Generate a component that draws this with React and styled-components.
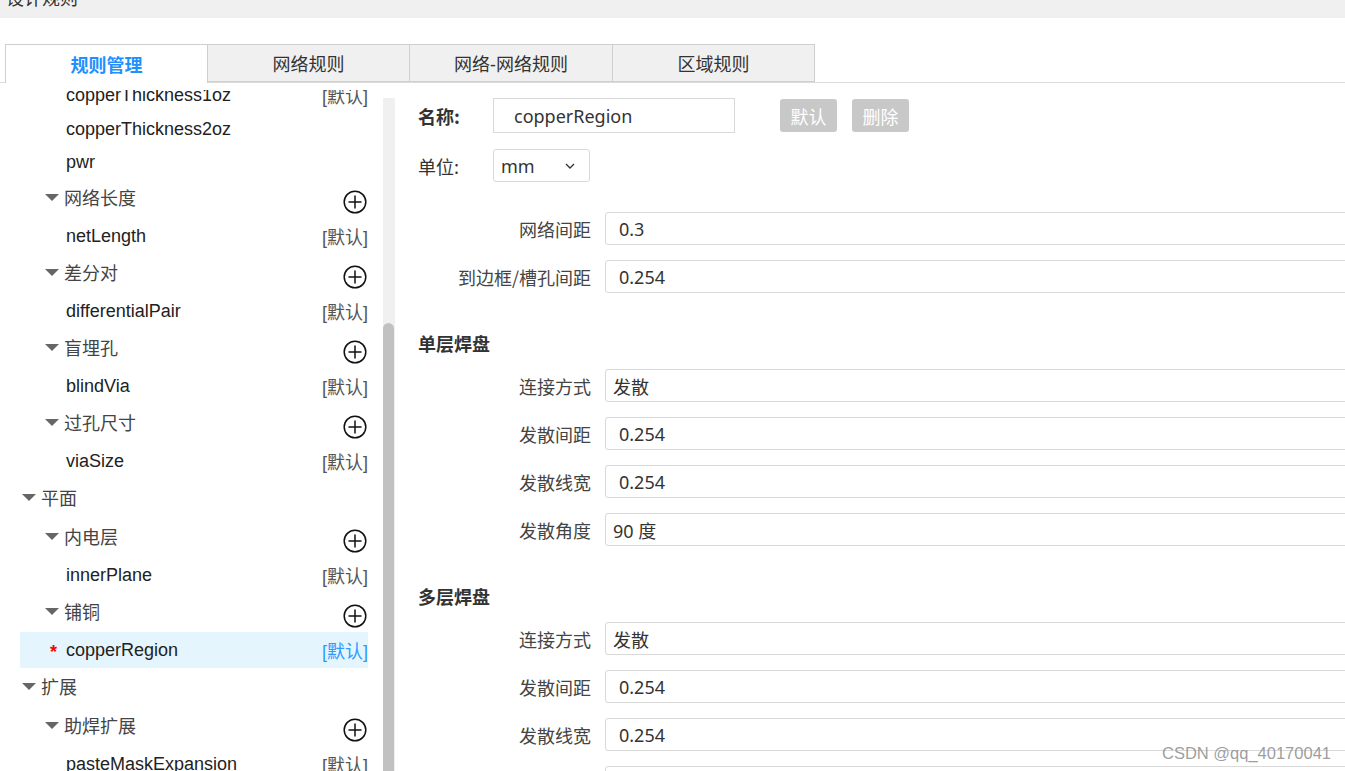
import React from "react";
import styled, { createGlobalStyle } from "styled-components";

const GlobalStyle = createGlobalStyle`
  html, body {
    margin: 0;
    padding: 0;
    background: #fff;
    overflow: hidden;
  }
  body {
    font-family: "Noto Sans", "Noto Sans CJK SC", sans-serif;
    color: #333;
  }
  * {
    box-sizing: border-box;
  }
`;

const treeData = [
  { type: "leaf", label: "copperThickness1oz", tag: true },
  { type: "leaf", label: "copperThickness2oz" },
  { type: "leaf", label: "pwr" },
  { type: "group", level: 2, label: "网络长度", add: true },
  { type: "leaf", label: "netLength", tag: true },
  { type: "group", level: 2, label: "差分对", add: true },
  { type: "leaf", label: "differentialPair", tag: true },
  { type: "group", level: 2, label: "盲埋孔", add: true },
  { type: "leaf", label: "blindVia", tag: true },
  { type: "group", level: 2, label: "过孔尺寸", add: true },
  { type: "leaf", label: "viaSize", tag: true },
  { type: "group", level: 1, label: "平面" },
  { type: "group", level: 2, label: "内电层", add: true },
  { type: "leaf", label: "innerPlane", tag: true },
  { type: "group", level: 2, label: "铺铜", add: true },
  { type: "leaf", label: "copperRegion", tag: true, selected: true, dirty: true },
  { type: "group", level: 1, label: "扩展" },
  { type: "group", level: 2, label: "助焊扩展", add: true },
  { type: "leaf", label: "pasteMaskExpansion", tag: true },
];

const sections = [
  {
    rows: [
      { label: "网络间距", value: "0.3" },
      { label: "到边框/槽孔间距", value: "0.254" },
    ],
  },
  {
    title: "单层焊盘",
    rows: [
      { label: "连接方式", value: "发散", pick: true },
      { label: "发散间距", value: "0.254" },
      { label: "发散线宽", value: "0.254" },
      { label: "发散角度", value: "90 度", pick: true },
    ],
  },
  {
    title: "多层焊盘",
    rows: [
      { label: "连接方式", value: "发散", pick: true },
      { label: "发散间距", value: "0.254" },
      { label: "发散线宽", value: "0.254" },
      { label: "", value: "" },
    ],
  },
];

const tabs = [
  { label: "规则管理", w: 203 },
  { label: "网络规则", w: 202 },
  { label: "网络-网络规则", w: 203 },
  { label: "区域规则", w: 202 },
];

function Caret() {
  return (
    <svg width="14" height="8" viewBox="0 0 14 8">
      <path d="M0 0 L14 0 L7 7 Z" fill="#666" />
    </svg>
  );
}

function AddIcon() {
  return (
    <svg width="24" height="24" viewBox="0 0 24 24">
      <circle cx="12" cy="12" r="10.8" fill="none" stroke="#111" strokeWidth="1.5" />
      <path d="M12 5.5 V18.5 M5.5 12 H18.5" stroke="#111" strokeWidth="1.5" />
    </svg>
  );
}

function Chevron() {
  return (
    <svg width="10" height="6" viewBox="0 0 10 6">
      <path d="M1 1 L5 5 L9 1" fill="none" stroke="#333" strokeWidth="1.3" />
    </svg>
  );
}

export default function App() {
  return (
    <>
      <GlobalStyle />
      <Page>
        <TitleBar>
          <TitleText>设计规则</TitleText>
        </TitleBar>
        <TabBar>
          {tabs.map((t, i) => (
            <Tab key={t.label} active={i === 0} first={i === 0} w={t.w}>
              {t.label}
            </Tab>
          ))}
        </TabBar>
        <Body>
          <LeftPane>
            <TreeViewport>
              <TreeList>
                {treeData.map((item, i) =>
                  item.type === "group" ? (
                    <GroupRow key={i} level={item.level}>
                      <CaretBox>
                        <Caret />
                      </CaretBox>
                      <GroupLabel>{item.label}</GroupLabel>
                      {item.add && (
                        <AddBox>
                          <AddIcon />
                        </AddBox>
                      )}
                    </GroupRow>
                  ) : (
                    <LeafRow key={i} tagged={item.tag} selected={item.selected}>
                      <Marker>{item.dirty ? "*" : ""}</Marker>
                      <LeafLabel>{item.label}</LeafLabel>
                      {item.tag && <Tag selected={item.selected}>[默认]</Tag>}
                    </LeafRow>
                  )
                )}
              </TreeList>
            </TreeViewport>
            <ScrollTrack>
              <ScrollThumb />
            </ScrollTrack>
          </LeftPane>
          <RightPane>
            <HeadRow>
              <HeadLabel bold>名称:</HeadLabel>
              <NameInput>copperRegion</NameInput>
              <ButtonGroup>
                <GrayButton>默认</GrayButton>
                <GrayButton>删除</GrayButton>
              </ButtonGroup>
            </HeadRow>
            <UnitRow>
              <HeadLabel>单位:</HeadLabel>
              <UnitSelect>
                <span>mm</span>
                <Chevron />
              </UnitSelect>
            </UnitRow>
            {sections.map((sec, si) => (
              <Section key={si} first={si === 0}>
                {sec.title && <SectionTitle>{sec.title}</SectionTitle>}
                {sec.rows.map((r, ri) => (
                  <FieldRow key={ri}>
                    <FieldLabel>{r.label}</FieldLabel>
                    <FieldBox pick={r.pick}>{r.value}</FieldBox>
                  </FieldRow>
                ))}
              </Section>
            ))}
            <Watermark>CSDN @qq_40170041</Watermark>
          </RightPane>
        </Body>
      </Page>
    </>
  );
}

const Page = styled.div`
  width: 1345px;
  height: 771px;
  display: flex;
  flex-direction: column;
  overflow: hidden;
`;

const TitleBar = styled.div`
  height: 18px;
  background: #f0f0f0;
  overflow: hidden;
  padding-left: 6px;
`;

const TitleText = styled.div`
  font-size: 18px;
  line-height: 24px;
  margin-top: -14px;
  color: #333;
`;

const TabBar = styled.div`
  margin-top: 26px;
  height: 39px;
  display: flex;
  padding-left: 5px;
  border-bottom: 1px solid #dcdcdc;
`;

const Tab = styled.div`
  width: ${({ w }) => w}px;
  height: ${({ active }) => (active ? "39px" : "38px")};
  display: flex;
  align-items: center;
  justify-content: center;
  font-size: 18px;
  font-weight: ${({ active }) => (active ? 700 : 400)};
  color: ${({ active }) => (active ? "#1e90ff" : "#333")};
  background: ${({ active }) => (active ? "#fff" : "#f0f0f0")};
  border: 1px solid #cfcfcf;
  border-left: ${({ first }) => (first ? "1px solid #cfcfcf" : "none")};
  border-bottom: ${({ active }) => (active ? "none" : "1px solid #cfcfcf")};
  position: relative;
  z-index: ${({ active }) => (active ? 1 : 0)};
`;

const Body = styled.div`
  flex: 1;
  display: flex;
  min-height: 0;
`;

const LeftPane = styled.div`
  width: 395px;
  display: flex;
  flex-shrink: 0;
`;

const TreeViewport = styled.div`
  width: 383px;
  overflow: hidden;
  margin-top: 7px;
`;

const TreeList = styled.div`
  margin: -13px 0 0 20px;
  width: 348px;
  font-size: 18px;
  color: #333;
`;

const GroupRow = styled.div`
  height: 39px;
  display: flex;
  align-items: flex-start;
  padding-left: ${({ level }) => (level === 1 ? "2px" : "25px")};
`;

const CaretBox = styled.div`
  width: 14px;
  height: 37px;
  display: flex;
  align-items: center;
  margin-right: 5px;
`;

const GroupLabel = styled.div`
  flex: 1;
  line-height: 37px;
  font-family: "Noto Sans CJK SC", sans-serif;
  font-size: 18px;
  color: #444;
`;

const AddBox = styled.div`
  margin-top: 11px;
  margin-right: 1px;
  line-height: 0;
`;

const LeafRow = styled.div`
  height: ${({ tagged }) => (tagged ? "36px" : "33px")};
  display: flex;
  align-items: center;
  padding-left: 30px;
  background: ${({ selected }) => (selected ? "#e4f5fd" : "transparent")};
`;

const Marker = styled.span`
  width: 16px;
  color: #f00;
  font-family: "Liberation Sans", sans-serif;
  font-size: 18px;
  font-weight: 700;
  padding-top: 4px;
`;

const LeafLabel = styled.span`
  flex: 1;
  font-family: "Liberation Sans", Arial, sans-serif;
  font-size: 18px;
  color: #222;
`;

const Tag = styled.span`
  font-family: "Liberation Sans", "Noto Sans CJK SC", sans-serif;
  font-size: 18px;
  color: ${({ selected }) => (selected ? "#2f9bff" : "#555")};
`;

const ScrollTrack = styled.div`
  width: 12px;
  margin-top: 15px;
  background: #f0f0f0;
  display: flex;
  flex-direction: column;
`;

const ScrollThumb = styled.div`
  flex: 1;
  margin-top: 225px;
  margin-right: 1px;
  background: #c1c1c1;
  border-radius: 6px 6px 0 0;
`;

const RightPane = styled.div`
  flex: 1;
  position: relative;
  overflow: hidden;
  padding: 15px 0 0 23px;
  font-family: "Noto Sans CJK SC", sans-serif;
  font-size: 18px;
  color: #333;
`;

const HeadRow = styled.div`
  display: flex;
  align-items: center;
  height: 35px;
`;

const HeadLabel = styled.div`
  width: 75px;
  flex-shrink: 0;
  font-weight: ${({ bold }) => (bold ? 700 : 400)};
  color: #333;
`;

const NameInput = styled.div`
  width: 242px;
  height: 35px;
  border: 1px solid #d9d9d9;
  display: flex;
  align-items: center;
  padding-left: 20px;
  font-family: "Noto Sans", "Noto Sans CJK SC", sans-serif;
  color: #333;
`;

const ButtonGroup = styled.div`
  display: flex;
  gap: 15px;
  margin-left: 45px;
`;

const GrayButton = styled.div`
  width: 57px;
  height: 33px;
  border-radius: 3px;
  background: #c8c8c8;
  color: #fff;
  display: flex;
  align-items: center;
  justify-content: center;
`;

const UnitRow = styled.div`
  display: flex;
  align-items: center;
  height: 33px;
  margin-top: 16px;
`;

const UnitSelect = styled.div`
  width: 97px;
  height: 33px;
  border: 1px solid #d9d9d9;
  border-radius: 3px;
  display: flex;
  align-items: center;
  justify-content: space-between;
  padding: 0 14px 0 7px;
  font-family: "Noto Sans", sans-serif;
`;

const Section = styled.div`
  margin-top: ${({ first }) => (first ? "30px" : "38px")};
  display: flex;
  flex-direction: column;
  gap: 15px;
`;

const SectionTitle = styled.div`
  font-weight: 700;
  line-height: 24px;
  margin-bottom: -1px;
  color: #333;
`;

const FieldRow = styled.div`
  display: flex;
  align-items: center;
  gap: 14px;
`;

const FieldLabel = styled.div`
  width: 173px;
  flex-shrink: 0;
  white-space: nowrap;
  text-align: right;
  color: #444;
`;

const FieldBox = styled.div`
  width: 780px;
  flex-shrink: 0;
  height: 33px;
  border: 1px solid #d9d9d9;
  border-radius: 3px;
  display: flex;
  align-items: center;
  padding-left: ${({ pick }) => (pick ? "7px" : "13px")};
  font-family: "Noto Sans", "Noto Sans CJK SC", sans-serif;
  color: #333;
`;

const Watermark = styled.div`
  position: absolute;
  right: 14px;
  bottom: 8px;
  font-family: "Liberation Sans", sans-serif;
  font-size: 16.5px;
  color: rgba(140, 140, 140, 0.85);
`;
